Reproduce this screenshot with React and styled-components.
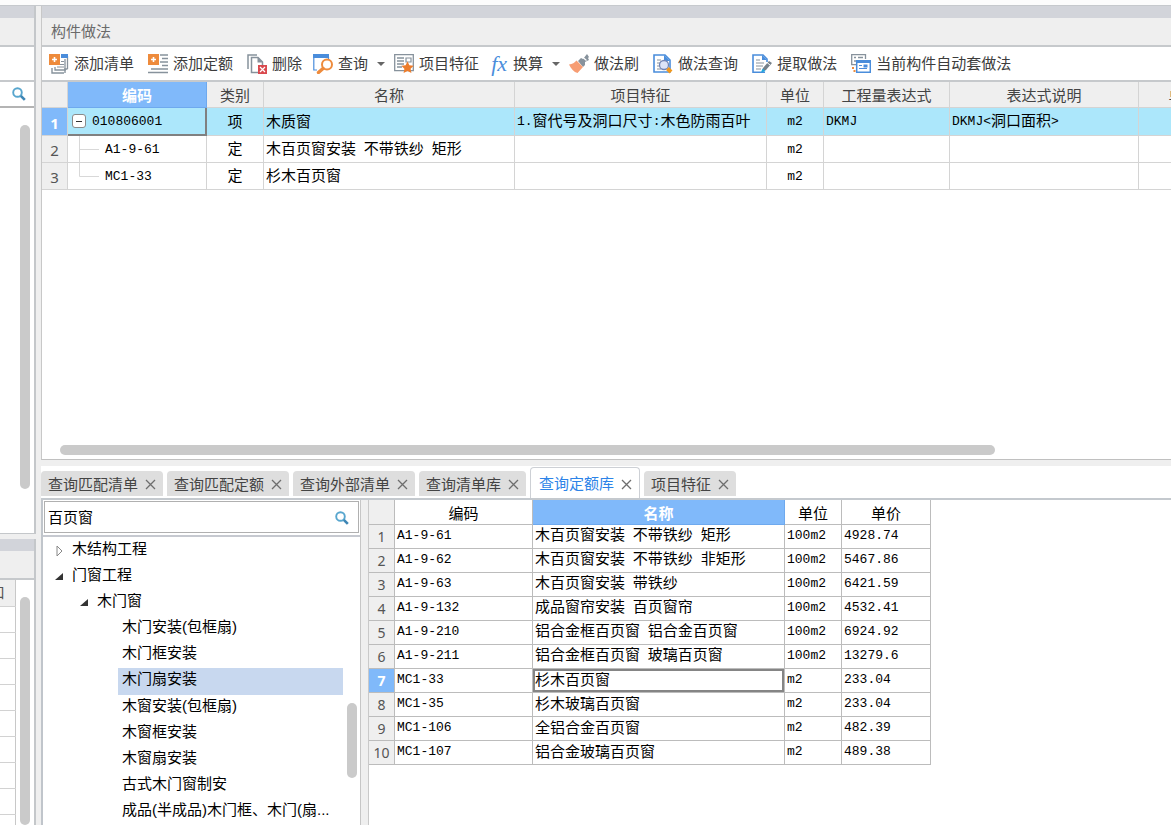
import React from "react";
import styled, { createGlobalStyle, css } from "styled-components";

const GlobalStyle = createGlobalStyle`
  * {
    box-sizing: border-box;
  }

  body {
    margin: 0;
    background: #efefef;
    color: #000;
    font: 15px/20px "Liberation Sans", "Noto Sans CJK SC", sans-serif;
  }

  button, input {
    font: inherit;
  }
`;

const Page = styled.div`
  height: 100vh;
  display: flex;
  flex-direction: column;
  overflow: hidden;
`;

const TopEdge = styled.div`
  flex: none;
  height: 6px;
  background: #fcfcfc;
  border-bottom: 1px solid #c6c9cd;
`;

const Workspace = styled.div`
  flex: 1;
  min-height: 0;
  display: flex;
  gap: 5px;
`;

const Sidebar = styled.aside`
  flex: none;
  width: 36px;
  display: flex;
  flex-direction: column;
  gap: 5px;
`;

const SidePanel = styled.section`
  display: flex;
  flex-direction: column;
  flex: ${(p) => (p.$fill ? "1" : "0 0 528px")};
  min-height: 0;
  overflow: hidden;
  background: #fff;
  border-right: 2px solid #c4c7ca;
  border-bottom: ${(p) => (p.$fill ? "0" : "1px solid #c4c7ca")};
`;

const Main = styled.main`
  flex: 1;
  min-width: 0;
  display: flex;
  flex-direction: column;
`;

const Strip = styled.div`
  flex: none;
  height: 12px;
  background: #d2d4da;
`;

const PanelTitle = styled.h1`
  flex: none;
  height: 29px;
  margin: 0;
  padding: 4px 9px;
  background: #efefef;
  border-bottom: 2px solid #c6c9cc;
  color: #6b6b6b;
  font-size: 15px;
  font-weight: normal;
`;

const SideBlank = styled.div`
  flex: none;
  height: 35px;
  border-bottom: 2px solid #c6c9cc;
`;

const SideSearch = styled.button`
  flex: none;
  height: 26px;
  padding: 0 8px 0 0;
  background: #fff;
  border: 0;
  border-bottom: 2px solid #b4b4b4;
  display: flex;
  align-items: center;
  justify-content: flex-end;
`;

const SideScroll = styled.div`
  flex: 1;
  display: flex;
  justify-content: flex-end;
  padding: 17px 4px 44px 0;
`;

const Thumb = styled.div`
  background: #cacaca;
  border-radius: 5px;
  width: 10px;
  flex: none;
  height: ${(p) => p.$size || "auto"};
`;

const SideBody = styled.div`
  flex: 1;
  display: flex;
  justify-content: space-between;
  overflow: hidden;
  padding-right: 4px;
`;

const SideTable = styled.table`
  width: 16px;
  border-collapse: collapse;
  align-self: flex-start;
  table-layout: fixed;

  th,
  td {
    height: 26px;
    padding: 0;
    border-right: 1px solid #c8c8c8;
    border-bottom: 1px solid #d2d2d2;
  }

  th {
    background: #efefef;
    color: #555;
    font-weight: normal;
    overflow: hidden;
    direction: rtl;
    white-space: nowrap;
    padding-right: 10px;
  }
`;

const SideTrack = styled.div`
  display: flex;
  padding-top: 17px;
`;

const MethodPanel = styled.section`
  flex: 0 0 454px;
  display: flex;
  flex-direction: column;
  background: #fff;
  border-left: 1px solid #c8c8c8;
  border-bottom: 1px solid #c0c0c0;
  overflow: hidden;
`;

const Toolbar = styled.div`
  flex: none;
  height: 35px;
  padding-top: 1px;
  display: flex;
  align-items: center;
  border-bottom: 2px solid #c6c9cc;
`;

const ToolButton = styled.button`
  flex: none;
  display: flex;
  align-items: center;
  gap: 5px;
  padding: 0 ${(p) => (p.$tight ? "4px" : "7px")} 0 7px;
  border: 0;
  background: none;
  color: #3c3c3c;
  white-space: nowrap;

  ${(p) =>
    p.$menu &&
    css`
      padding-right: 2px;
    `}
`;

const Caret = styled.span`
  margin-left: 4px;
  border: 4px solid transparent;
  border-top-color: #666;
  border-bottom: 0;
`;

const GridScroll = styled.div`
  flex: 1;
  overflow: hidden;
`;

const MethodTable = styled.table`
  width: 1187px;
  table-layout: fixed;
  border-collapse: separate;
  border-spacing: 0;

  th,
  td {
    padding: 0 2px;
    border-right: 1px solid #d4d4d4;
    border-bottom: 1px solid #d4d4d4;
    white-space: nowrap;
    overflow: hidden;
  }

  th {
    height: 26px;
    padding-top: 2px;
    background: #efefef;
    color: #444;
    font-weight: normal;
  }

  td {
    height: 27px;
  }

  tbody tr:first-child > * {
    height: 28px;
    background: #ace7fb;
  }
`;

const HeadCell = styled.th`
  && {
    ${(p) =>
      p.$active &&
      css`
        background: #80b9fa;
        border-color: #6ea9ee;
        color: #fff;
        font-weight: bold;
      `}
  }
`;

const NumberCell = styled.th`
  &&& {
    background: ${(p) => (p.$active ? "#80b9fa" : "#efefef")};
    color: ${(p) => (p.$active ? "#fff" : "#555")};
    font-family: "Noto Sans", sans-serif;
    font-weight: ${(p) => (p.$active ? "bold" : "normal")};
    padding-top: 2px;
  }
`;

const Cell = styled.td`
  text-align: ${(p) => p.$align || "left"};

  &&& {
    ${(p) =>
      p.$focused &&
      css`
        border-right: 2px solid #808080;
        border-bottom: 2px solid #808080;
      `}
  }
`;

const CodeLine = styled.div`
  display: flex;
  align-items: center;
  gap: 6px;
  padding-left: 2px;

  span {
    padding-top: 2px;
  }
`;

const Collapse = styled.button`
  width: 14px;
  height: 14px;
  padding: 0;
  border: 1px solid #8a8a8a;
  border-radius: 3px;
  background: #fff;
  display: flex;
  align-items: center;
  justify-content: center;

  &::after {
    content: "";
    width: 6px;
    height: 1px;
    background: #333;
  }
`;

const Branch = styled.svg`
  flex: none;
  width: 27px;
  height: 26px;
  display: block;
`;

// half-width characters are set smaller so they keep to the cell rhythm
const Half = styled.span`
  font-family: "Liberation Mono", monospace;
  font-size: 13px;
  vertical-align: 1px;
  white-space: pre;
`;

const HorizontalTrack = styled.div`
  flex: none;
  padding: 0 176px 4px 18px;
`;

const HorizontalThumb = styled.div`
  height: 10px;
  border-radius: 5px;
  background: #cacaca;
`;

const QueryPanel = styled.section`
  flex: 1;
  min-height: 0;
  margin-top: 6px;
  display: flex;
  flex-direction: column;
`;

const TabBar = styled.div`
  flex: none;
  height: 34px;
  display: flex;
  align-items: flex-end;
  gap: 4px;
  background: #fff;
  border-bottom: 2px solid #c4c9ce;
`;

const Tab = styled.div`
  display: flex;
  align-items: center;
  gap: 6px;
  height: 25px;
  margin-bottom: 2px;
  padding: 2px 6px 0 7px;
  border-radius: 4px 4px 0 0;
  background: #dedede;
  color: #444;

  ${(p) =>
    p.$active &&
    css`
      height: 31px;
      margin-bottom: 0;
      padding-left: 8px;
      background: #fff;
      border: 1px solid #cdd0d5;
      border-bottom: 0;
      color: #2c83e8;
    `}
`;

const TabLabel = styled.button`
  padding: 0;
  border: 0;
  background: none;
  color: inherit;
  white-space: nowrap;
`;

const CloseButton = styled.button`
  width: 13px;
  height: 13px;
  padding: 0;
  border: 0;
  background: none;
  color: #6e6e6e;

  svg {
    display: block;
  }
`;

const QueryBody = styled.div`
  flex: 1;
  min-height: 0;
  display: flex;
`;

const TreePanel = styled.div`
  flex: none;
  width: 320px;
  display: flex;
  flex-direction: column;
  background: #fff;
  border-left: 2px solid #c0c5cb;
  border-right: 1px solid #c6c6c6;
`;

const SearchRow = styled.div`
  flex: none;
  height: 37px;
  padding: 1px 1px 2px;
  border-bottom: 2px solid #c6c9d0;
`;

const SearchBox = styled.label`
  height: 32px;
  display: flex;
  align-items: center;
  padding: 2px 9px 0 3px;
  border: 1px solid #b0b0b0;

  input {
    flex: 1;
    min-width: 0;
    padding: 0;
    border: 0;
    outline: 0;
  }
`;

const TreeArea = styled.div`
  flex: 1;
  min-height: 0;
  display: flex;
  gap: 4px;
  padding-right: 3px;
`;

const Tree = styled.ul`
  flex: 1;
  min-width: 0;
  margin: 0;
  padding: 1px 0 0;
  list-style: none;
  display: grid;
  grid-auto-rows: 1fr;
`;

const TreeNode = styled.li`
  display: flex;
  align-items: flex-start;
  gap: 8px;
  margin-left: ${(p) => p.$level * 25}px;
  padding-top: 1px;
  padding-left: ${(p) => (p.$leaf ? "4px" : "12px")};
  background: ${(p) => (p.$active ? "#c8d8ef" : "none")};
  white-space: nowrap;
`;

const TreeToggle = styled.button`
  width: 9px;
  padding: 6px 0 0;
  border: 0;
  background: none;

  svg {
    display: block;
  }
`;

const TreeThumbTrack = styled.div`
  padding-top: 166px;
`;

const Splitter = styled.div`
  flex: none;
  width: 8px;
  background: #efefef;
  border-right: 1px solid #c9c9c9;
`;

const ResultArea = styled.div`
  flex: 1;
  min-width: 0;
  background: #fff;
`;

const ResultTable = styled.table`
  width: 562px;
  table-layout: fixed;
  border-collapse: separate;
  border-spacing: 0;

  th,
  td {
    height: 24px;
    padding: 0 2px 2px;
    border-right: 1px solid #bcbcbc;
    border-bottom: 1px solid #bcbcbc;
    white-space: nowrap;
    font-weight: normal;
    line-height: 18px;
  }

  thead th {
    height: 25px;
    padding: 3px 2px 0;
  }
`;

const ResultNumber = styled(NumberCell)`
  font-size: 14px;
`;

const FocusCell = styled.td`
  && {
    ${(p) =>
      p.$focused &&
      css`
        box-shadow: inset 0 0 0 2px #858585;
      `}
  }
`;

const orange = "#ee8b3c";
const steel = "#87929c";
const blue = "#4a8ddb";

const icons = {
  addList: (
    <>
      <path d="M12 1.5h7M18.5 2v13M6 13v3h10V5" fill="none" stroke={steel} strokeWidth="1.3" />
      <path d="M12 0h7v4h-7z" fill={blue} />
      <path d="M3 14v5h12M18.5 15H16v4" fill="none" stroke={steel} strokeWidth="1.4" />
      <path d="M12 7.5h3M8 10.5h7M8 13h7" stroke={steel} />
      <path d="M0 0h11v11H0z" fill={orange} />
      <path d="M5.5 3v5M3 5.5h5" stroke="#fff" strokeWidth="1.6" />
    </>
  ),
  addQuota: (
    <>
      <path d="M12 1h8M14 4.5h6M12 8h8M14 11.5h6M3 15h17M0 18.5h20" stroke={steel} strokeWidth="1.3" />
      <path d="M0 0h11v11H0z" fill={orange} />
      <path d="M5.5 3v5M3 5.5h5" stroke="#fff" strokeWidth="1.6" />
    </>
  ),
  remove: (
    <>
      <path d="M1 15V1h9" fill="none" stroke={steel} strokeWidth="1.5" />
      <path d="M11 18.5H4.5V3.5H11L15.5 8v3" fill="#fff" stroke={steel} strokeWidth="1.5" />
      <path d="M10.5 3v5.5H16z" fill={steel} />
      <path d="M11 11h9v9h-9z" fill="#d9494e" />
      <path d="m13 13 5 5m0-5-5 5" stroke="#fff" strokeWidth="1.2" />
    </>
  ),
  query: (
    <>
      <path d="M.8 2v14H4M15.5 3v3" fill="none" stroke={blue} strokeWidth="1.2" />
      <path d="M0 0h16v4H0z" fill={blue} />
      <circle cx="14" cy="10.5" r="5" fill="#fff" stroke={orange} strokeWidth="2" />
      <path d="m10 14.5-4.5 4" stroke={orange} strokeWidth="3.4" strokeLinecap="round" />
    </>
  ),
  feature: (
    <>
      <path d="M.7.7h18.6v16H.7z" fill="#fff" stroke={steel} strokeWidth="1.3" />
      <path d="M3 4h7M3 7h7M3 10h7M3 13h5" stroke={steel} strokeWidth="1.4" />
      <path d="M12 4h5v4h-5z" fill="none" stroke={steel} strokeWidth="1.2" />
      <path d="m13.5 7.500 1.900 3.800 4.300.5-3.100 2.900.8 4.300-3.900-2.100-3.900 2.100.8-4.300-3.100-2.900 4.300-.5z" fill="#ec7d2d" />
    </>
  ),
  brush: (
    <>
      <path d="M9 7 12 4l2 1 4-5 2 3-1 1 1 2-4 2 0 3-2 2z" fill={steel} />
      <path d="m14 3.5 3.5 3" stroke="#fff" strokeWidth="1.2" />
      <path d="m7.500 6.500 6.500 6.500-5.500 6c-3.500-1-6.500-4-8.500-8.500 3.500-.5 5.500-1.500 7.500-4z" fill="#f79d73" />
    </>
  ),
  methodQuery: (
    <>
      <path d="M1 1h11l5 5v12H1z" fill="#fff" stroke={blue} strokeWidth="1.6" />
      <path d="M11 1v6h6z" fill={blue} />
      <path d="M4 6h4M4 9h3M4 12h3M4 15h4" stroke={steel} />
      <circle cx="11" cy="11" r="4.5" fill="#dce4f8" stroke="#7285b5" strokeWidth="1.3" />
      <path d="m14.5 14.5 3.5 3.5" stroke="#f2981b" strokeWidth="4" />
    </>
  ),
  extract: (
    <>
      <path d="M13 18.2H1V1h10l4 4v3" fill="#fff" stroke={blue} strokeWidth="1.6" />
      <path d="M10 1v5h5z" fill={blue} />
      <path d="M4 6h4M4 9h8M4 12h7M4 15h5" stroke={steel} strokeWidth="1.2" />
      <path d="m10 18 1-4 6-7 3 2-6 7z" fill="#75808a" />
      <path d="m15 8.5 3 2.5" stroke="#fff" />
      <path d="m9 18.5 1.5-4 3 2.5z" fill="#20a7df" />
    </>
  ),
  auto: (
    <>
      <path d="M14.5 5V.7H.7v10H5" fill="none" stroke={steel} strokeWidth="1.3" />
      <path d="M3 3.5h2M7 3.5h5M3 7h2" stroke={steel} strokeWidth="1.3" />
      <path d="M5.7 6.7h13.6v11.6H5.7z" fill="#fff" stroke={blue} strokeWidth="1.5" />
      <path d="M5.7 8h13.6" stroke={blue} strokeWidth="2" />
      <path d="M8 11.5h3M8 14.5h8" stroke={blue} strokeWidth="1.2" />
      <path d="M12.5 10.5h4v3h-4z" fill={blue} />
      <path d="M1 13h2v2H1zM2.5 16h2v2h-2z" fill={orange} />
    </>
  ),
};

const FxMark = styled.span`
  width: 18px;
  color: #4a8ddb;
  font: italic 22px/20px "Liberation Serif", serif;
`;

const ToolIcon = ({ name }) =>
  name === "fx" ? (
    <FxMark>fx</FxMark>
  ) : (
    <svg width="20" height="20" viewBox="0 0 20 20">
      {icons[name]}
    </svg>
  );

const Magnifier = () => (
  <svg width="14" height="14" viewBox="0 0 14 14" fill="none">
    <circle cx="5.5" cy="5.5" r="4.3" stroke="#58a6ce" strokeWidth="1.9" />
    <path d="m8.8 8.8 4 4" stroke="#3d86b5" strokeWidth="2.6" />
  </svg>
);

const tools = [
  { icon: "addList", label: "添加清单" },
  { icon: "addQuota", label: "添加定额" },
  { icon: "remove", label: "删除", tight: true },
  { icon: "query", label: "查询", menu: true },
  { icon: "feature", label: "项目特征", tight: true },
  { icon: "fx", label: "换算", menu: true },
  { icon: "brush", label: "做法刷" },
  { icon: "methodQuery", label: "做法查询" },
  { icon: "extract", label: "提取做法" },
  { icon: "auto", label: "当前构件自动套做法" },
];

const methodColumns = [
  { title: "编码", width: 139 },
  { title: "类别", width: 57 },
  { title: "名称", width: 251 },
  { title: "项目特征", width: 252 },
  { title: "单位", width: 57 },
  { title: "工程量表达式", width: 126 },
  { title: "表达式说明", width: 189 },
  { title: "单价", width: 90 },
];

const methods = [
  {
    code: "010806001",
    type: "项",
    name: "木质窗",
    feature: "1.窗代号及洞口尺寸:木色防雨百叶",
    unit: "m2",
    expr: "DKMJ",
    note: "DKMJ<洞口面积>",
  },
  { code: "A1-9-61", type: "定", name: "木百页窗安装 不带铁纱 矩形", unit: "m2" },
  { code: "MC1-33", type: "定", name: "杉木百页窗", unit: "m2" },
];

const tabs = ["查询匹配清单", "查询匹配定额", "查询外部清单", "查询清单库", "查询定额库", "项目特征"];

const treeNodes = [
  { label: "木结构工程", level: 0, open: false },
  { label: "门窗工程", level: 0, open: true },
  { label: "木门窗", level: 1, open: true },
  { label: "木门安装(包框扇)", level: 3 },
  { label: "木门框安装", level: 3 },
  { label: "木门扇安装", level: 3 },
  { label: "木窗安装(包框扇)", level: 3 },
  { label: "木窗框安装", level: 3 },
  { label: "木窗扇安装", level: 3 },
  { label: "古式木门窗制安", level: 3 },
  { label: "成品(半成品)木门框、木门(扇...", level: 3 },
];

const results = [
  ["A1-9-61", "木百页窗安装 不带铁纱 矩形", "100m2", "4928.74"],
  ["A1-9-62", "木百页窗安装 不带铁纱 非矩形", "100m2", "5467.86"],
  ["A1-9-63", "木百页窗安装 带铁纱", "100m2", "6421.59"],
  ["A1-9-132", "成品窗帘安装 百页窗帘", "100m2", "4532.41"],
  ["A1-9-210", "铝合金框百页窗 铝合金百页窗", "100m2", "6924.92"],
  ["A1-9-211", "铝合金框百页窗 玻璃百页窗", "100m2", "13279.6"],
  ["MC1-33", "杉木百页窗", "m2", "233.04"],
  ["MC1-35", "杉木玻璃百页窗", "m2", "233.04"],
  ["MC1-106", "全铝合金百页窗", "m2", "482.39"],
  ["MC1-107", "铝合金玻璃百页窗", "m2", "489.38"],
];

const GridText = ({ children = "" }) =>
  children
    .split(/([\x20-\x7e]+)/)
    .map((part, i) => (i % 2 ? <Half key={i}>{part}</Half> : part));

const MethodCode = ({ index, code }) => (
  <CodeLine>
    {index === 0 ? (
      <Collapse aria-label="折叠" />
    ) : (
      <Branch viewBox="0 0 27 26" fill="none" stroke="#d8d8d8">
        <path d={index === 1 ? "M7.5 0v26M7.5 13.5H27" : "M7.5 0v13.5H27"} />
      </Branch>
    )}
    <GridText>{code}</GridText>
  </CodeLine>
);

const MethodGrid = () => (
  <MethodTable>
    <colgroup>
      <col style={{ width: 26 }} />
      {methodColumns.map((c) => (
        <col key={c.title} style={{ width: c.width }} />
      ))}
    </colgroup>
    <thead>
      <tr>
        <th />
        {methodColumns.map((c, i) => (
          <HeadCell key={c.title} $active={i === 0}>
            {c.title}
          </HeadCell>
        ))}
      </tr>
    </thead>
    <tbody>
      {methods.map((m, i) => (
        <tr key={m.code}>
          <NumberCell $active={i === 0}>{i + 1}</NumberCell>
          <Cell $focused={i === 0}>
            <MethodCode index={i} code={m.code} />
          </Cell>
          <Cell $align="center">{m.type}</Cell>
          <Cell>
            <GridText>{m.name}</GridText>
          </Cell>
          <Cell>
            <GridText>{m.feature}</GridText>
          </Cell>
          <Cell $align="center">
            <GridText>{m.unit}</GridText>
          </Cell>
          <Cell>
            <GridText>{m.expr}</GridText>
          </Cell>
          <Cell>
            <GridText>{m.note}</GridText>
          </Cell>
          <Cell />
        </tr>
      ))}
    </tbody>
  </MethodTable>
);

const QueryTree = () => (
  <TreePanel>
    <SearchRow>
      <SearchBox>
        <input aria-label="查询" defaultValue="百页窗" />
        <Magnifier />
      </SearchBox>
    </SearchRow>
    <TreeArea>
      <Tree>
        {treeNodes.map((n) => (
          <TreeNode key={n.label} $level={n.level} $leaf={n.level === 3} $active={n.label === "木门扇安装"}>
            {n.level < 3 && (
              <TreeToggle aria-label={n.label}>
                <svg width="9" height="11" viewBox="0 0 9 11">
                  {n.open ? (
                    <path d="M8 2v7H0z" fill="#333" />
                  ) : (
                    <path d="M2 1 7 6 2 11z" fill="#fff" stroke="#888" />
                  )}
                </svg>
              </TreeToggle>
            )}
            {n.label}
          </TreeNode>
        ))}
      </Tree>
      <TreeThumbTrack>
        <Thumb $size="75px" />
      </TreeThumbTrack>
    </TreeArea>
  </TreePanel>
);

const ResultGrid = () => (
  <ResultTable>
    <colgroup>
      <col style={{ width: 26 }} />
      <col style={{ width: 138 }} />
      <col style={{ width: 252 }} />
      <col style={{ width: 57 }} />
      <col style={{ width: 89 }} />
    </colgroup>
    <thead>
      <tr>
        <ResultNumber as="td" />
        <th>编码</th>
        <HeadCell $active>名称</HeadCell>
        <th>单位</th>
        <th>单价</th>
      </tr>
    </thead>
    <tbody>
      {results.map(([code, name, unit, price], i) => (
        <tr key={code}>
          <ResultNumber $active={i === 6}>{i + 1}</ResultNumber>
          <td>
            <GridText>{code}</GridText>
          </td>
          <FocusCell $focused={i === 6}>
            <GridText>{name}</GridText>
          </FocusCell>
          <td>
            <GridText>{unit}</GridText>
          </td>
          <td>
            <GridText>{price}</GridText>
          </td>
        </tr>
      ))}
    </tbody>
  </ResultTable>
);

export default () => {
  return (
    <Page>
      <GlobalStyle />
      <TopEdge />
      <Workspace>
        <Sidebar>
          <SidePanel>
            <Strip />
            <PanelTitle as="div" />
            <SideBlank />
            <SideSearch aria-label="搜索">
              <Magnifier />
            </SideSearch>
            <SideScroll>
              <Thumb />
            </SideScroll>
          </SidePanel>
          <SidePanel $fill>
            <Strip />
            <PanelTitle as="div" />
            <SideBody>
              <SideTable>
                <thead>
                  <tr>
                    <th>口</th>
                  </tr>
                </thead>
                <tbody>
                  {[...Array(10)].map((_, i) => (
                    <tr key={i}>
                      <td />
                    </tr>
                  ))}
                </tbody>
              </SideTable>
              <SideTrack>
                <Thumb />
              </SideTrack>
            </SideBody>
          </SidePanel>
        </Sidebar>
        <Main>
          <MethodPanel>
            <Strip />
            <PanelTitle>构件做法</PanelTitle>
            <Toolbar>
              {tools.map((t) => (
                <ToolButton key={t.label} $tight={t.tight} $menu={t.menu}>
                  <ToolIcon name={t.icon} />
                  {t.label}
                  {t.menu && <Caret />}
                </ToolButton>
              ))}
            </Toolbar>
            <GridScroll>
              <MethodGrid />
            </GridScroll>
            <HorizontalTrack>
              <HorizontalThumb />
            </HorizontalTrack>
          </MethodPanel>
          <QueryPanel>
            <TabBar>
              {tabs.map((t) => (
                <Tab key={t} $active={t === "查询定额库"}>
                  <TabLabel>{t}</TabLabel>
                  <CloseButton aria-label={`关闭${t}`}>
                    <svg width="13" height="13" viewBox="0 0 13 13">
                      <path d="m2 2 9 9m0-9-9 9" stroke="currentColor" strokeWidth="1.3" />
                    </svg>
                  </CloseButton>
                </Tab>
              ))}
            </TabBar>
            <QueryBody>
              <QueryTree />
              <Splitter />
              <ResultArea>
                <ResultGrid />
              </ResultArea>
            </QueryBody>
          </QueryPanel>
        </Main>
      </Workspace>
    </Page>
  );
};
